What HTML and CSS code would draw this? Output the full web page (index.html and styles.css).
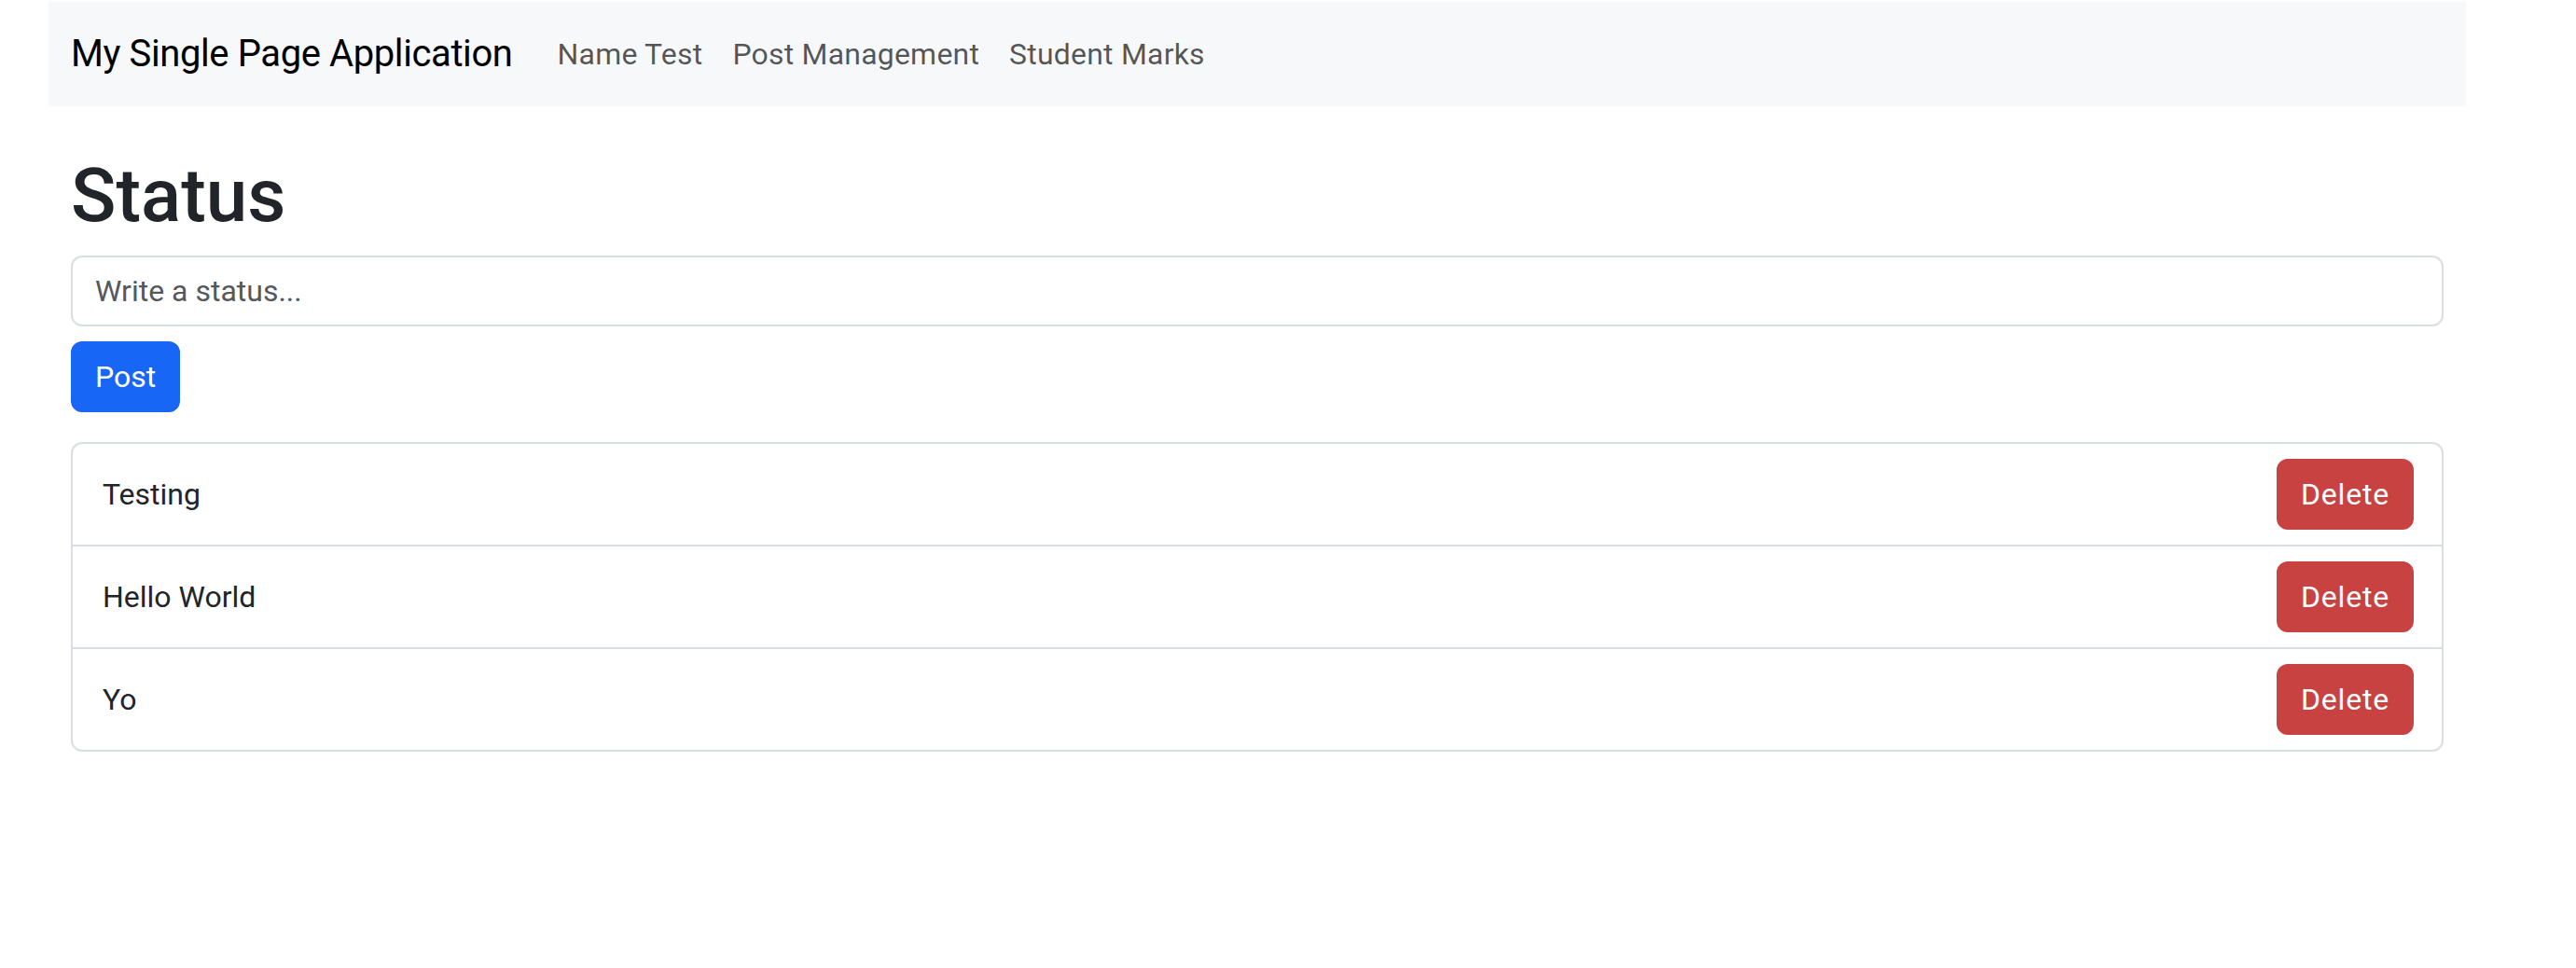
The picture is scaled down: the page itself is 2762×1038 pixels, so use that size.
FILE: index.html
```html
<!DOCTYPE html>
<html lang="en">
<head>
<meta charset="utf-8">
<title>My Single Page Application</title>
<link rel="stylesheet" href="styles.css">
</head>
<body>
<div class="app">
  <nav class="navbar">
    <a class="brand" href="#">My Single Page Application</a>
    <ul class="nav">
      <li><a class="nav-link" href="#">Name Test</a></li>
      <li><a class="nav-link" href="#">Post Management</a></li>
      <li><a class="nav-link" href="#">Student Marks</a></li>
    </ul>
  </nav>
  <main class="content">
    <h1 class="title">Status</h1>
    <input class="form-control" type="text" placeholder="Write a status...">
    <button class="btn btn-primary" type="button">Post</button>
    <ul class="list-group">
      <li class="list-item"><span>Testing</span><button class="btn btn-danger" type="button">Delete</button></li>
      <li class="list-item"><span>Hello World</span><button class="btn btn-danger" type="button">Delete</button></li>
      <li class="list-item"><span>Yo</span><button class="btn btn-danger" type="button">Delete</button></li>
    </ul>
  </main>
</div>
</body>
</html>
```

FILE: styles.css
```css
* { box-sizing: border-box; }

html, body {
  margin: 0;
  padding: 0;
  background: #ffffff;
}

body {
  font-family: Roboto, "Noto Sans", "Liberation Sans", sans-serif;
  font-size: 32px;
  line-height: 1.5;
  color: #212529;
}

.app {
  margin: 2px 0 0 52px;
  width: 2592px;
}

.navbar {
  display: flex;
  align-items: center;
  height: 112px;
  padding: 16px 24px;
  background: #f7f8fa;
}

.brand {
  font-size: 40px;
  line-height: 60px;
  padding: 10px 0;
  margin-right: 32px;
  color: #000000;
  text-decoration: none;
  white-space: nowrap;
  letter-spacing: -0.4px;
}

.nav {
  display: flex;
  list-style: none;
  margin: 0;
  padding: 0;
}

.nav-link {
  display: block;
  padding: 16px 16px;
  font-size: 32px;
  line-height: 48px;
  color: rgba(0, 0, 0, 0.66);
  text-decoration: none;
  white-space: nowrap;
  letter-spacing: 0.2px;
}

.content {
  margin-top: 48px;
  padding: 0 24px;
}

.title {
  margin: 0 0 16px;
  font-size: 80px;
  font-weight: 500;
  line-height: 1.2;
  color: #212529;
}

.form-control {
  display: block;
  width: 100%;
  height: 76px;
  margin: 0 0 16px;
  padding: 12px 24px;
  font-family: inherit;
  font-size: 32px;
  line-height: 48px;
  color: #212529;
  background: #ffffff;
  border: 2px solid #dadde2;
  border-radius: 12px;
  outline: none;
}

.form-control::placeholder {
  color: #55585c;
  opacity: 1;
}

.btn {
  display: inline-block;
  height: 76px;
  padding: 12px 24px;
  font-family: inherit;
  font-size: 32px;
  line-height: 48px;
  color: #ffffff;
  border: 2px solid transparent;
  border-radius: 12px;
  cursor: pointer;
}

.btn-primary {
  background: #1766f5;
  border-color: #1766f5;
}

.btn-danger {
  background: #c84242;
  border-color: #c84242;
  letter-spacing: 0.8px;
}

.list-group {
  list-style: none;
  margin: 32px 0 0;
  padding: 0;
  border: 2px solid #dadde2;
  border-radius: 12px;
}

.list-item {
  display: flex;
  justify-content: space-between;
  align-items: center;
  padding: 16px 30px 16px 32px;
  color: #212529;
}

.list-item + .list-item {
  border-top: 2px solid #dadde2;
}
```
